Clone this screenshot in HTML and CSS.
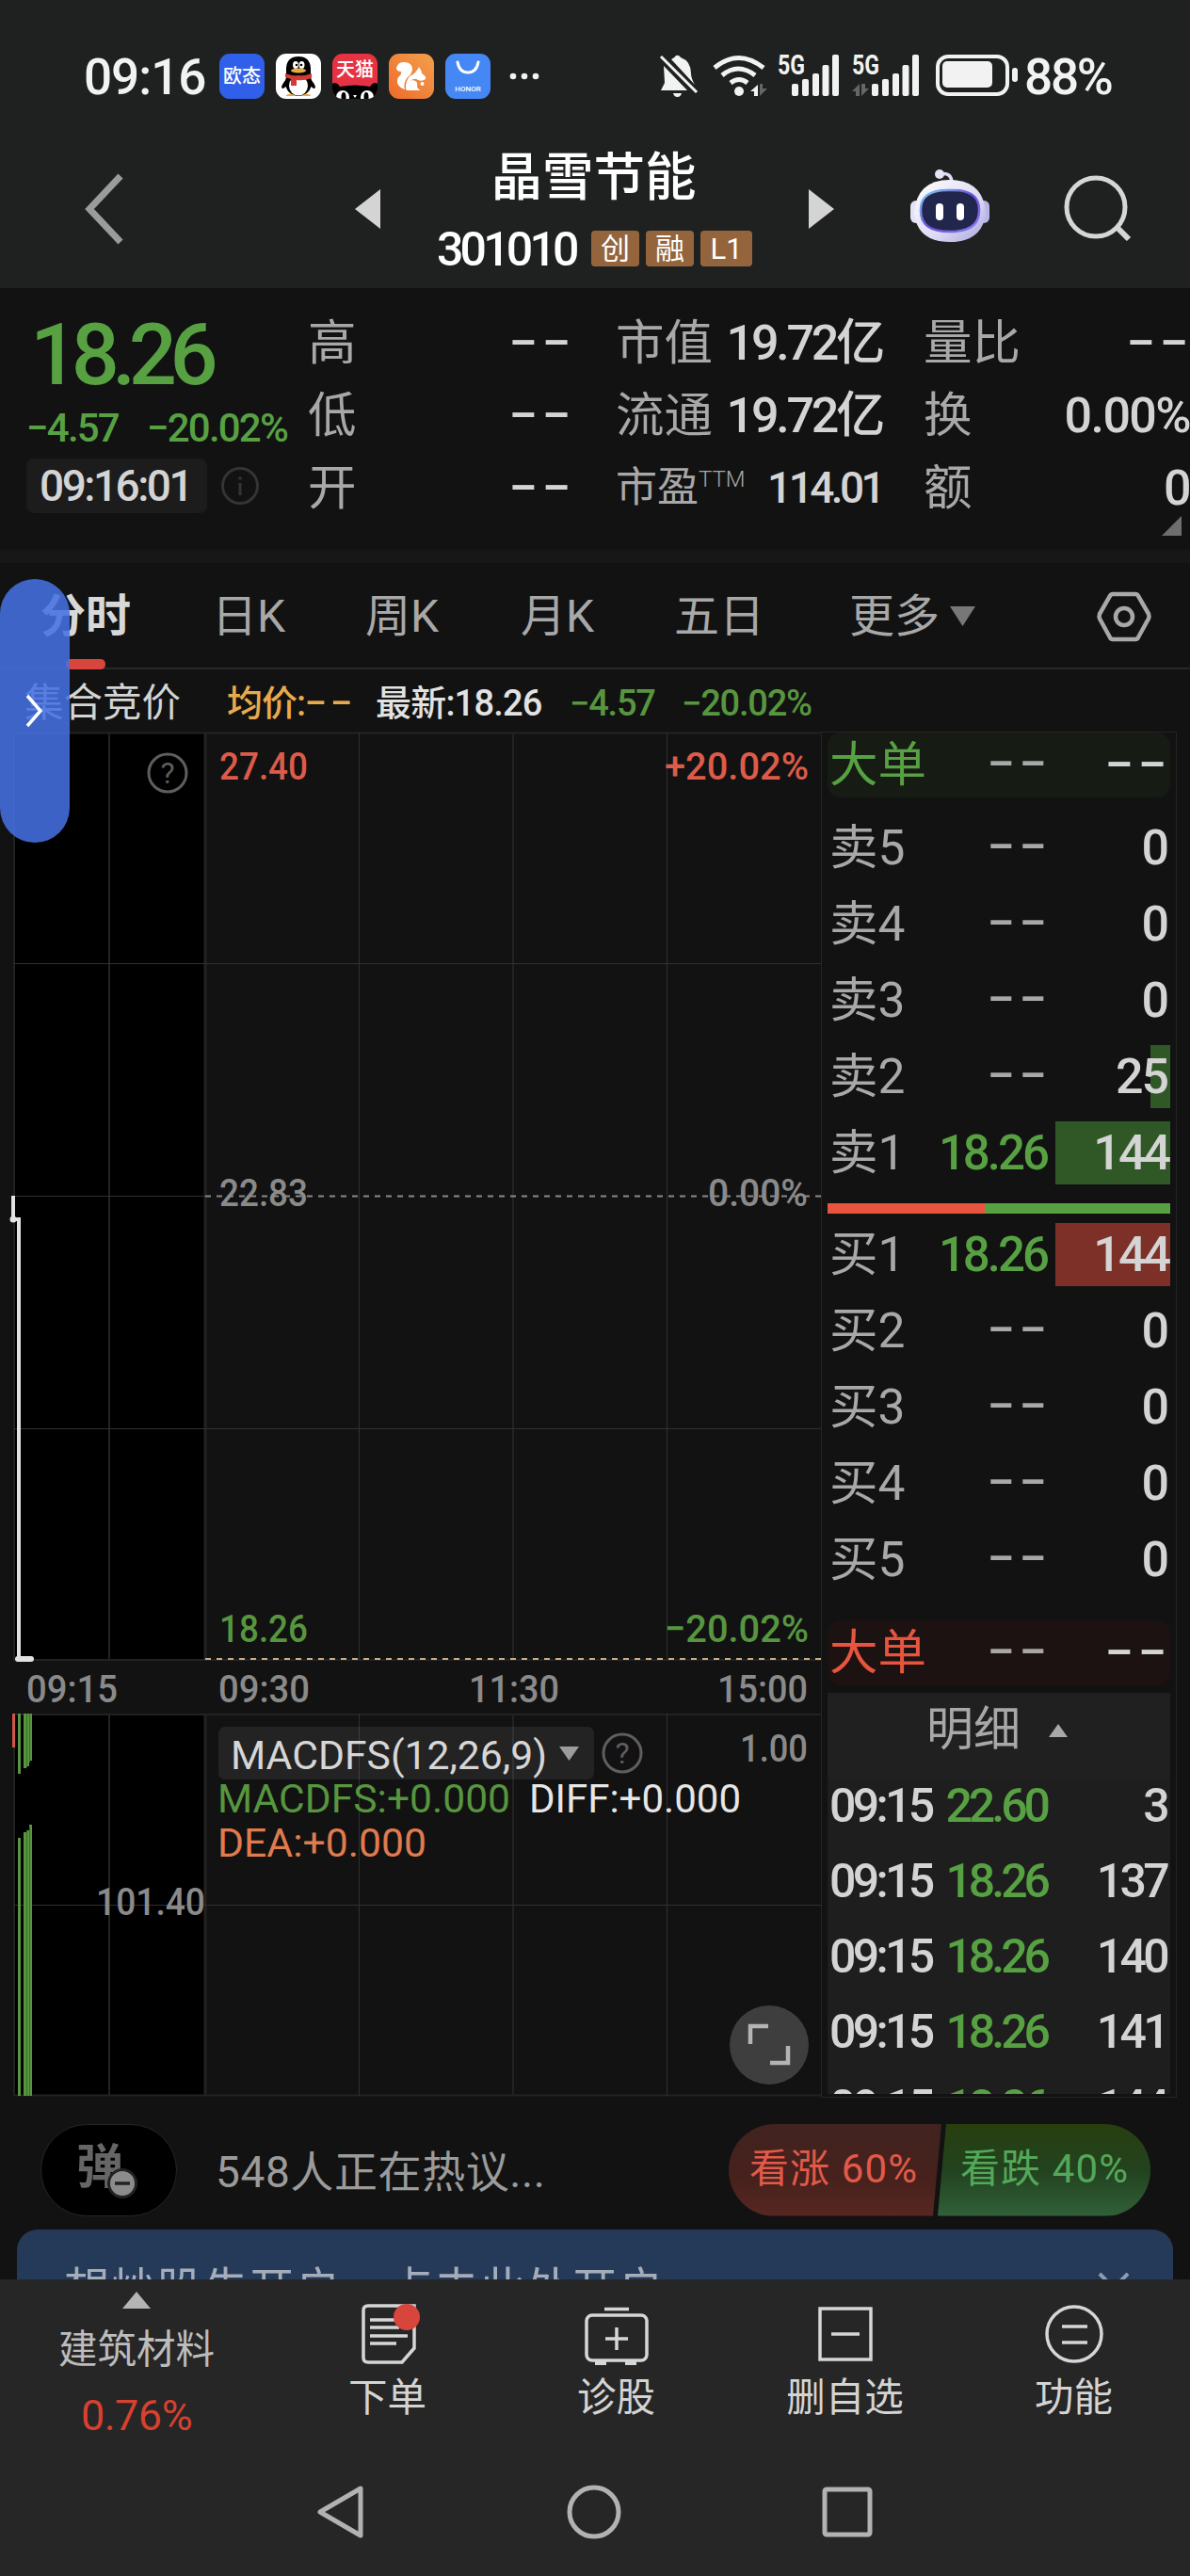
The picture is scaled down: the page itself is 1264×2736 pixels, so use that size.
FILE: index.html
```html
<!DOCTYPE html>
<html lang="zh-CN">

<head>
    <meta charset="UTF-8">
    <meta name="viewport" content="width=device-width, initial-scale=1.0">
    <title>晶雪节能 301010</title>
    <link rel="stylesheet" href="styles.css">
</head>

<body>
    <header class="top">
        <div class="status">
            <span class="clock">09:16</span>
            <div class="apps">
                <span class="app app-ot">欧态</span>
                <svg class="app" viewBox="0 0 48 48">
                    <rect width="48" height="48" fill="#fff" />
                    <path d="M11 27Q3 37 8 37L13 33ZM37 27Q45 37 40 37L35 33Z" fill="#000" />
                    <ellipse cx="24" cy="31" rx="14" ry="14" fill="#000" />
                    <path d="M11 24V15Q12 3 24 3t13 12v9Z" fill="#000" />
                    <ellipse cx="24" cy="34" rx="10" ry="10.500" fill="#fff" />
                    <ellipse cx="21" cy="12" rx="3" ry="4" fill="#fff" />
                    <ellipse cx="27.500" cy="12" rx="3" ry="4" fill="#fff" />
                    <circle cx="22" cy="12" r="1.300" />
                    <circle cx="27" cy="12" r="1.300" />
                    <ellipse cx="24" cy="18" rx="8" ry="2.500" fill="#e9a93c" />
                    <path d="M10 21q14 5 28 0v5q-8 3-16 2v6h-6v-7l-6-2Z" fill="#d33a35" />
                    <path d="M11 44q6-3 10 1H11ZM37 44q-6-3-10 1h10Z" fill="#e9a93c" />
                </svg>
                <span class="app app-tm">天猫
                    <svg viewBox="0 0 48 20">
                        <path d="M0 20V3q4-3 8 3q16-3 32 0q4-6 8-3v17Z" fill="#000" />
                        <ellipse cx="11" cy="17" rx="7" ry="7" fill="#fff" />
                        <ellipse cx="37" cy="17" rx="7" ry="7" fill="#fff" />
                        <ellipse cx="12" cy="17" rx="2.500" ry="5" fill="#000" />
                        <ellipse cx="36" cy="17" rx="2.500" ry="5" fill="#000" />
                        <path d="M22 15h4l-2 3Z" fill="#fff" />
                    </svg>
                </span>
                <svg class="app" viewBox="0 0 48 48">
                    <defs>
                        <linearGradient id="uc" x1="0" y1="1" x2="1" y2="0">
                            <stop offset="0" stop-color="#ee6a2c" />
                            <stop offset="1" stop-color="#f3a04c" />
                        </linearGradient>
                    </defs>
                    <rect width="48" height="48" fill="url(#uc)" />
                    <path d="M17 38Q6 34 10 25q4-3 3-6q-5 0-5-4q2-7 9-6q8 1 8 7q0 5-5 9q-5 6-3 13Z" fill="#fff" />
                    <path d="M22 24q7-3 10-10q3 4 3 7q5 3 4 6q-4 3-8 1q-4-3-8 1q-5 4-3 9q-4-6 2-14Z" fill="#fff" />
                    <path d="M18 37q-1-8 7-9q7 1 5 7q1 3 4 4H21q-3 0-3-2Z" fill="#fff" />
                    <circle cx="35.500" cy="32" r="2" fill="#fff" />
                </svg>
                <span class="app app-honor">
                    <svg viewBox="0 0 48 34">
                        <path d="M13 9q2 11 11 11t11-11" fill="none" stroke="#fff" stroke-width="3"
                            stroke-linecap="round" />
                    </svg>
                    HONOR
                </span>
            </div>
            <svg class="more" viewBox="0 0 32 8" fill="#f2f2f2">
                <circle cx="4" cy="4" r="3.300" />
                <circle cx="16" cy="4" r="3.300" />
                <circle cx="28" cy="4" r="3.300" />
            </svg>
            <svg class="signals" viewBox="0 0 384 48" fill="#f2f2f2">
                <!-- muted bell -->
                <path d="M13 6q4-2 5-4q3-1 5 2q11 4 11 17q0 5 4 12l-25-27ZM5 13l25 26H2l4-8Z" />
                <path d="M15 42h9q-1 4-4.500 4t-4.500-4Z" />
                <path d="M2 3l38 38" stroke="#f2f2f2" stroke-width="3" />
                <!-- wifi -->
                <g fill="none" stroke="#f2f2f2" stroke-width="5">
                    <path d="M59 15q25-21 52 0" />
                    <path d="M67 23q17-14 35 0" />
                    <path d="M76 31q9-7 18 0" />
                </g>
                <circle cx="85" cy="40" r="5" />
                <path d="M105 45V33l-8 7h4v5Z" />
                <path d="M107 32v13l8-8h-5v-5Z" fill="#666" />
                <!-- sim 1 -->
                <text class="net" x="126" y="22" textLength="29" lengthAdjust="spacingAndGlyphs">5G</text>
                <rect x="141" y="32" width="7" height="13" rx="2" />
                <rect x="152" y="27" width="7" height="18" rx="2" />
                <rect x="163" y="21" width="7" height="24" rx="2" />
                <rect x="173.500" y="12" width="7" height="33" rx="2" />
                <rect x="184" y="1" width="7" height="44" rx="2" />
                <!-- sim 2 -->
                <text class="net" x="205" y="22" textLength="29" lengthAdjust="spacingAndGlyphs">5G</text>
                <path d="M213 45V32l-8 8h4v5ZM215 32v13l8-8h-4v-5Z" fill="#666" />
                <rect x="226" y="32" width="7" height="13" rx="2" />
                <rect x="237" y="27" width="7" height="18" rx="2" />
                <rect x="248" y="21" width="7" height="24" rx="2" />
                <rect x="258.500" y="12" width="7" height="33" rx="2" />
                <rect x="269" y="1" width="7" height="44" rx="2" />
                <!-- battery -->
                <rect x="296" y="3" width="74" height="40" rx="11" fill="none" stroke="#f2f2f2" stroke-width="4" />
                <rect x="301" y="8" width="53" height="28" rx="5" />
                <rect x="375" y="15" width="6" height="15" rx="3" />
            </svg>
            <span class="battery">88%</span>
        </div>

        <div class="title-bar">
            <svg class="back" viewBox="0 0 46 80">
                <path d="M41 5L8 40l33 35" fill="none" stroke="#9b9b9b" stroke-width="7" />
            </svg>
            <svg class="prev" viewBox="0 0 27 42"><path d="M27 0v42L0 21Z" fill="#d4d4d4" /></svg>
            <div class="name">
                <h1>晶雪节能</h1>
                <p><b>301010</b><i>创</i><i>融</i><i class="l1">L1</i></p>
            </div>
            <svg class="next" viewBox="0 0 27 42"><path d="M0 0v42l27-21Z" fill="#d4d4d4" /></svg>
            <svg class="robot" viewBox="0 0 86 80">
                <defs>
                    <linearGradient id="shell" x1="0" y1="0" x2="1" y2="1">
                        <stop offset="0" stop-color="#fff" />
                        <stop offset=".6" stop-color="#dcdaf2" />
                        <stop offset="1" stop-color="#a8a4e0" />
                    </linearGradient>
                    <linearGradient id="rim" x1="0" y1="0" x2="1" y2="1">
                        <stop offset="0" stop-color="#7fd0ee" />
                        <stop offset=".5" stop-color="#6a4fd8" />
                        <stop offset="1" stop-color="#8a7cf0" />
                    </linearGradient>
                </defs>
                <path d="M32 6q13-3 13 10" fill="none" stroke="#dcdaf2" stroke-width="3.500" />
                <circle cx="32" cy="6" r="5" fill="#e4e2f5" />
                <rect x="1" y="34" width="12" height="24" rx="6" fill="#e4e2f5" />
                <rect x="73" y="34" width="12" height="24" rx="6" fill="#b9b6e6" />
                <path d="M43 12q36 0 38 36q-4 30-38 30T5 48q2-36 38-36Z" fill="url(#shell)" />
                <path d="M43 23q32-1 31 22q0 22-31 22T12 45q-1-23 31-22Z" fill="#20264c" stroke="url(#rim)"
                    stroke-width="2.500" />
                <rect x="28" y="37" width="8" height="18" rx="4" fill="#fff" />
                <rect x="50" y="37" width="8" height="18" rx="4" fill="#fff" />
            </svg>
            <svg class="search" viewBox="0 0 74 74" fill="none" stroke="#d6d6d6" stroke-width="5">
                <circle cx="35" cy="35" r="31" />
                <path d="M57 56l13 13" stroke-width="6" />
            </svg>
        </div>
    </header>

    <section class="quote">
        <div class="price">
            <strong>18.26</strong>
            <p class="change"><span>−4.57</span><span>−20.02%</span></p>
            <p class="time"><span>09:16:01</span>
                <svg viewBox="0 0 42 42" fill="none" stroke="#343434" stroke-width="3">
                    <circle cx="21" cy="21" r="18.500" />
                    <path d="M21 18v13M21 11.500v3" />
                </svg>
            </p>
        </div>
        <dl class="col-a">
            <dt>高</dt><dd><span class="dash">--</span></dd>
            <dt>低</dt><dd><span class="dash">--</span></dd>
            <dt>开</dt><dd><span class="dash">--</span></dd>
        </dl>
        <dl class="col-b">
            <dt>市值</dt><dd>19.72亿</dd>
            <dt>流通</dt><dd>19.72亿</dd>
            <dt class="pe">市盈<sup>TTM</sup></dt><dd class="pe">114.01</dd>
        </dl>
        <dl class="col-c">
            <dt>量比</dt><dd><span class="dash">--</span></dd>
            <dt>换</dt><dd>0.00%</dd>
            <dt>额</dt><dd>0</dd>
        </dl>
        <svg class="corner" viewBox="0 0 21 21"><path d="M21 0v21H0Z" fill="#6e6e6e" /></svg>
    </section>

    <nav class="tabs">
        <span class="active">分时</span>
        <span>日K</span>
        <span>周K</span>
        <span>月K</span>
        <span>五日</span>
        <span>更多<svg class="caret" viewBox="0 0 27 21"><path d="M0 0h27L13.500 21Z" fill="#777" /></svg></span>
        <svg class="setting" viewBox="0 0 60 56" fill="none" stroke="#a8a8a8" stroke-width="4.500">
            <path d="M18 4h24q2 0 3 2l11 19q1 3 0 5L45 50q-1 2-3 2H18q-2 0-3-2L4 30q-1-2 0-5L15 6q1-2 3-2Z" />
            <circle cx="30" cy="28" r="9" />
        </svg>
    </nav>

    <div class="legend">
        <span class="auction">集合竞价</span>
        <span class="avg">均价:<span class="dash">--</span></span>
        <span class="last">最新:18.26</span>
        <span class="down">−4.57</span>
        <span class="down">−20.02%</span>
    </div>

    <main class="board">
        <svg class="chart" viewBox="0 777 872 1452">
            <rect x="16" y="779" width="201" height="984" fill="#000" />
            <rect x="16" y="1821" width="201" height="405" fill="#000" />
            <g stroke="#222" stroke-width="2" fill="none">
                <path d="M15 778.500H872M15 1763H872M15 1821H872M15 2225.500H872" />
                <path d="M15 778V1763M15 1820V2226M116 778V1763M116 1820V2226M545 778V1763M545 1820V2226" />
                <path d="M218 778V1763M218 1820V2226" stroke-width="3" />
            </g>
            <g stroke="#303030" fill="none">
                <path d="M15 1023.500H872M15 1270.500H218M15 1517.500H872M15 2023.500H872" />
                <path d="M381.500 778V1763M381.500 1820V2226M708.500 778V1763M708.500 1820V2226" />
            </g>
            <path d="M218 1270.500H872" stroke="#8a8a8a" stroke-width="2" stroke-dasharray="6 6" />
            <path d="M218 1762H872" stroke="#c9ad84" stroke-width="2" stroke-dasharray="6 6" />

            <!-- auction price -->
            <path d="M14 1270v25h6v467h13" fill="none" stroke="#e2e2e2" stroke-width="4" />
            <circle cx="14" cy="1295" r="3.500" fill="#e2e2e2" />
            <path d="M19 1762h14" stroke="#e2e2e2" stroke-width="6" stroke-linecap="round" />

            <!-- auction volume -->
            <rect x="13" y="1820" width="3" height="36" fill="#cf5546" />
            <g fill="#57963f">
                <rect x="19" y="1820" width="3" height="64" />
                <path d="M25 1820h9v50h-3v6h-3v2h-3Z" />
                <rect x="19" y="1952" width="3" height="274" />
                <path d="M25 2226v-280h3v-2h3v-6h3v288Z" />
            </g>
            <path d="M28.500 1820v57M31.500 1820v52M28.500 1944v282M31.500 1940v286" stroke="#3c7029" />

            <g class="label">
                <text class="up" x="233" y="828" textLength="94" lengthAdjust="spacingAndGlyphs">27.40</text>
                <text class="up" x="706" y="828" textLength="153" lengthAdjust="spacingAndGlyphs">+20.02%</text>
                <text x="233" y="1281" textLength="94" lengthAdjust="spacingAndGlyphs">22.83</text>
                <text x="752" y="1281" textLength="106" lengthAdjust="spacingAndGlyphs">0.00%</text>
                <text class="fall" x="233" y="1744" textLength="94" lengthAdjust="spacingAndGlyphs">18.26</text>
                <text class="fall" x="706" y="1744" textLength="153" lengthAdjust="spacingAndGlyphs">−20.02%</text>
                <text x="28" y="1808" textLength="97" lengthAdjust="spacingAndGlyphs">09:15</text>
                <text x="232" y="1808" textLength="97" lengthAdjust="spacingAndGlyphs">09:30</text>
                <text x="498" y="1808" textLength="96" lengthAdjust="spacingAndGlyphs">11:30</text>
                <text x="762" y="1808" textLength="96" lengthAdjust="spacingAndGlyphs">15:00</text>
                <text x="786" y="1871" textLength="72" lengthAdjust="spacingAndGlyphs">1.00</text>
                <text x="102" y="2034" textLength="116" lengthAdjust="spacingAndGlyphs">101.40</text>
            </g>

            <g class="help">
                <circle cx="178" cy="821" r="20" />
                <text x="178" y="832">?</text>
                <circle cx="661" cy="1862" r="20" />
                <text x="661" y="1873">?</text>
            </g>

            <rect x="232" y="1834" width="399" height="56" rx="7" fill="#fff" fill-opacity=".075" />
            <path d="M594 1855h21l-10.500 15Z" fill="#9c9c9c" />
            <g class="macd">
                <text x="245" y="1879" fill="#d6d6d6" textLength="336" lengthAdjust="spacingAndGlyphs">MACDFS(12,26,9)</text>
                <text x="231" y="1925" fill="#57963f" textLength="311" lengthAdjust="spacingAndGlyphs">MACDFS:+0.000</text>
                <text x="562" y="1925" fill="#e6e6e6" textLength="225" lengthAdjust="spacingAndGlyphs">DIFF:+0.000</text>
                <text x="231" y="1972" fill="#e07b4e" textLength="222" lengthAdjust="spacingAndGlyphs">DEA:+0.000</text>
            </g>

            <circle cx="817" cy="2172" r="42" fill="#3e3e3e" />
            <path d="M797 2171v-19h19M837 2173v18h-19" fill="none" stroke="#b4b4b4" stroke-width="4.500" />
        </svg>

        <aside class="book">
            <div class="row big sell"><span>大单</span><span class="dash">--</span><em><span class="dash">--</span></em></div>
            <div class="asks">
                <div class="row"><span>卖5</span><span class="dash">--</span><em>0</em></div>
                <div class="row"><span>卖4</span><span class="dash">--</span><em>0</em></div>
                <div class="row"><span>卖3</span><span class="dash">--</span><em>0</em></div>
                <div class="row"><span>卖2</span><span class="dash">--</span><em class="bar small">25</em></div>
                <div class="row"><span>卖1</span><b>18.26</b><em class="bar">144</em></div>
            </div>
            <div class="ratio"></div>
            <div class="bids">
                <div class="row"><span>买1</span><b>18.26</b><em class="bar">144</em></div>
                <div class="row"><span>买2</span><span class="dash">--</span><em>0</em></div>
                <div class="row"><span>买3</span><span class="dash">--</span><em>0</em></div>
                <div class="row"><span>买4</span><span class="dash">--</span><em>0</em></div>
                <div class="row"><span>买5</span><span class="dash">--</span><em>0</em></div>
            </div>
            <div class="row big buy"><span>大单</span><span class="dash">--</span><em><span class="dash">--</span></em></div>
            <div class="detail-head">明细<svg viewBox="0 0 20 14"><path d="M10 0l10 14H0Z" fill="#a8a8a8" /></svg></div>
            <div class="detail">
                <p><span>09:15</span><b>22.60</b><em>3</em></p>
                <p><span>09:15</span><b>18.26</b><em>137</em></p>
                <p><span>09:15</span><b>18.26</b><em>140</em></p>
                <p><span>09:15</span><b>18.26</b><em>141</em></p>
                <p><span>09:15</span><b>18.26</b><em>144</em></p>
            </div>
        </aside>
    </main>

    <section class="talk">
        <div class="danmu">弹
            <svg viewBox="0 0 32 32">
                <circle cx="16" cy="16" r="14.500" fill="#8c8c8c" stroke="#222" stroke-width="3" />
                <path d="M8 16h16" stroke="#222" stroke-width="3.500" />
            </svg>
        </div>
        <p>548人正在热议...</p>
        <div class="vote">
            <span class="rise">看涨 60%</span>
            <span class="drop">看跌 40%</span>
        </div>
    </section>

    <div class="banner">
        <span>想炒股先开户，点击此处开户&gt;</span>
        <svg viewBox="0 0 34 34"><path d="M2 2l30 30M32 2L2 32" stroke="#8f9bb0" stroke-width="4" /></svg>
    </div>

    <footer class="bottom">
        <div class="menu">
            <div class="sector">
                <svg viewBox="0 0 30 18"><path d="M15 0l15 18H0Z" fill="#b4b4b4" /></svg>
                <span>建筑材料</span>
                <b>0.76%</b>
            </div>
            <div class="item">
                <svg viewBox="0 0 70 70" fill="none" stroke="#d6d6d6" stroke-width="3.500">
                    <path d="M14 5h49v45L50 65H14q-5 0-5-5V10q0-5 5-5Z" />
                    <path d="M16 20h26M16 28h31M16 37h40M16 45h28" />
                    <circle cx="55" cy="17" r="14" fill="#d8453c" stroke="none" />
                </svg>
                <span>下单</span>
            </div>
            <div class="item">
                <svg viewBox="0 0 70 70" fill="none" stroke="#d6d6d6" stroke-width="3.500">
                    <rect x="3" y="15" width="64" height="48" rx="6" />
                    <path d="M22 8.500h26M35 28v24M23 40h24" />
                    <path d="M12 66h12M44 66h12" stroke-width="4" />
                </svg>
                <span>诊股</span>
            </div>
            <div class="item">
                <svg viewBox="0 0 70 70" fill="none" stroke="#d6d6d6" stroke-width="3.500">
                    <rect x="8" y="8" width="54" height="54" />
                    <path d="M20 35h30" />
                </svg>
                <span>删自选</span>
            </div>
            <div class="item">
                <svg viewBox="0 0 70 70" fill="none" stroke="#d6d6d6" stroke-width="3.500">
                    <circle cx="35" cy="35" r="29" />
                    <path d="M22 27h27M22 44h27" />
                </svg>
                <span>功能</span>
            </div>
        </div>
        <div class="keys">
            <svg viewBox="0 0 60 60"><path d="M51 5v50L8 30Z" /></svg>
            <svg viewBox="0 0 60 60"><circle cx="30" cy="30" r="26" /></svg>
            <svg viewBox="0 0 60 60"><rect x="6" y="6" width="48" height="48" rx="2" /></svg>
        </div>
    </footer>

    <div class="drawer">
        <svg viewBox="0 0 22 36"><path d="M3 2l14 16L3 34" fill="none" stroke="#fff" stroke-width="3.500" /></svg>
    </div>
</body>

</html>
```

FILE: styles.css
```css
* {
    box-sizing: border-box;
}

body {
    margin: 0;
    width: 1264px;
    height: 2736px;
    overflow: hidden;
    position: relative;
    background: #121212;
    color: #d4d4d4;
    font-family: Roboto, "Noto Sans CJK SC", sans-serif;
}

h1,
p,
dl,
dd {
    margin: 0;
}

em,
i {
    font-style: normal;
}

svg {
    display: block;
    flex: none;
}

.dash {
    display: inline-block;
    letter-spacing: 0.06em;
    margin-right: -0.06em;
    transform: translateY(-0.06em) scaleX(1.7);
    transform-origin: right;
}

/* status bar + title */
.top {
    height: 306px;
    background: #1f2120;
}

.status {
    display: flex;
    align-items: center;
    height: 162px;
    padding-left: 89px;
    color: #f2f2f2;
    font-size: 53px;
    font-weight: 500;
    line-height: 60px;
}

.clock {
    width: 144px;
    padding-top: 2px;
    letter-spacing: -1px;
}

.apps {
    display: flex;
    gap: 12px;
}

.app {
    width: 48px;
    height: 48px;
    border-radius: 11px;
    overflow: hidden;
    color: #fff;
    text-align: center;
}

.app-ot {
    background: #3060ea;
    font-size: 20px;
    line-height: 49px;
}

.app-tm {
    background: #e63344;
    font-size: 20px;
    line-height: 34px;
}

.app-tm svg {
    margin-top: -5px;
}

.app-honor {
    background: #4588f5;
    font-size: 8px;
    line-height: 8px;
}

.more {
    width: 32px;
    margin-left: 20px;
}

.signals {
    width: 384px;
    height: 48px;
    margin-left: 127px;
    overflow: visible;
}

.net {
    font-size: 29px;
    font-weight: 700;
}

.battery {
    margin-left: 4px;
    padding-top: 2px;
    letter-spacing: -2.2px;
}

.title-bar {
    display: flex;
    height: 144px;
    padding-left: 87px;
}

.title-bar svg {
    margin-top: 39px;
}

.title-bar .back {
    width: 46px;
    height: 80px;
    margin-top: 20px;
}

.prev,
.next {
    width: 27px;
    height: 42px;
}

.prev {
    margin-left: 244px;
}

.name {
    width: 455px;
    text-align: center;
    color: #fff;
}

h1 {
    margin: -1px 2px 0 0;
    font-size: 54.5px;
    font-weight: 500;
    line-height: 54px;
}

.name p {
    display: flex;
    align-items: center;
    height: 38px;
    margin: 30px 0 0 60px;
}

.name b {
    width: 164px;
    padding-top: 1px;
    text-align: left;
    font-size: 50px;
    font-weight: 500;
    letter-spacing: -3.8px;
}

.name i {
    width: 51px;
    height: 38px;
    margin-right: 7px;
    border-radius: 4px;
    background: #94653c;
    font-size: 31px;
    line-height: 39px;
}

.name .l1 {
    width: 55px;
    margin-right: 0;
}

.title-bar .robot {
    width: 86px;
    height: 80px;
    margin: 17px 0 0 80px;
}

.title-bar .search {
    width: 74px;
    height: 74px;
    margin: 23px 0 0 77px;
}

/* quote */
.quote {
    position: relative;
    display: flex;
    height: 292px;
    padding: 20px 0 0 28px;
    border-bottom: 14px solid #171717;
}

.price {
    width: 299px;
    color: #57a143;
}

.price strong {
    display: block;
    padding: 7px 0 0 4px;
    font-size: 90px;
    font-weight: 500;
    line-height: 90px;
    letter-spacing: -7.5px;
}

.change {
    display: flex;
    gap: 30px;
    margin-top: 10px;
    font-size: 42px;
    font-weight: 500;
    line-height: 44px;
    letter-spacing: -1.8px;
    white-space: nowrap;
}

.time {
    display: flex;
    align-items: center;
    gap: 14px;
    margin-top: 10px;
}

.time span {
    width: 192px;
    height: 58px;
    padding-left: 14px;
    border-radius: 8px;
    background: #1c1c1c;
    color: #d4d4d4;
    font-size: 46px;
    font-weight: 500;
    line-height: 58px;
    letter-spacing: -2.5px;
}

.time svg {
    width: 42px;
}

dl {
    display: grid;
    grid-template-columns: 104px 1fr;
    grid-auto-rows: 77px;
    align-items: center;
    font-size: 52px;
    line-height: 77px;
    white-space: nowrap;
}

dt {
    color: #a8a8a8;
    font-size: 51.5px;
}

dd {
    text-align: right;
    font-weight: 500;
    letter-spacing: -2.5px;
}

.col-a {
    width: 281px;
}

.col-a .dash,
.col-c .dash {
    margin-right: -0.07em;
}

.col-b {
    width: 283px;
    margin-left: 46px;
}

.col-b dd {
    letter-spacing: -3.2px;
}

.col-c {
    width: 283px;
    margin-left: 44px;
}

.col-c dd {
    letter-spacing: -1.6px;
}

dt.pe {
    font-size: 44px;
}

.col-b dd.pe {
    direction: rtl;
    font-size: 46px;
    letter-spacing: -3.6px;
}

sup {
    font-size: 24px;
    font-weight: 300;
    line-height: 0;
}

.corner {
    position: absolute;
    right: 9px;
    bottom: 15px;
    width: 21px;
}

/* period tabs */
.tabs {
    display: grid;
    grid-template-columns: 182px 163px 165px 163px 186px 262px 60px;
    align-items: center;
    height: 113px;
    padding-left: 43px;
    border-bottom: 2px solid #282828;
    color: #a8a8a8;
    font-size: 48px;
    line-height: 114px;
}

.active {
    position: relative;
    color: #d8d8d8;
    font-weight: 700;
}

.active::after {
    content: "";
    position: absolute;
    left: 27px;
    bottom: 1px;
    width: 42px;
    height: 11px;
    border-radius: 5px;
    background: #d8453c;
}

.caret {
    display: inline-block;
    width: 27px;
    margin-left: 11px;
    vertical-align: 6px;
}

.legend {
    display: flex;
    height: 66px;
    padding-left: 26px;
    font-size: 38px;
    line-height: 72px;
    letter-spacing: -1px;
    white-space: nowrap;
}

.auction {
    width: 215px;
    font-size: 41.5px;
    letter-spacing: 0;
}

.avg {
    width: 158px;
    color: #e8ab4c;
    font-weight: 500;
}

.avg .dash {
    transform: translate(0, -0.06em) scaleX(1.8);
    transform-origin: left;
}

.last {
    width: 206px;
    color: #e2e2e2;
    font-weight: 500;
    letter-spacing: -0.8px;
}

.down {
    width: 119px;
    color: #57963f;
    font-weight: 500;
    letter-spacing: -1.2px;
}

/* chart + order book */
.board {
    display: flex;
    height: 1452px;
}

.chart {
    width: 872px;
    height: 1452px;
}

.label {
    fill: #8a8a8a;
    font-size: 41.5px;
    font-weight: 500;
}

.label .up {
    fill: #dd5b48;
}

.label .fall {
    fill: #57963f;
}

.help circle {
    fill: none;
    stroke: #5e5e5e;
    stroke-width: 3;
}

.help text {
    fill: #5e5e5e;
    font-size: 32px;
    text-anchor: middle;
}

.macd {
    font-size: 43px;
}

.book {
    width: 378px;
    height: 1451px;
    padding: 0 6px;
    border: 1px solid #242424;
}

.row {
    display: grid;
    grid-template-columns: 103px 130px 1fr;
    align-items: center;
    height: 67px;
    margin-bottom: 14px;
    padding-left: 2px;
    color: #a8a8a8;
    font-size: 51.5px;
    line-height: 67px;
    white-space: nowrap;
}

.row > .dash {
    font-weight: 500;
    font-size: 50px;
    text-align: right;
}

.row b {
    width: 128px;
    color: #57a143;
    font-size: 51px;
    font-weight: 500;
    text-align: right;
    letter-spacing: -3px;
}

.row em {
    height: 67px;
    padding-right: 2px;
    color: #d4d4d4;
    font-size: 52px;
    font-weight: 500;
    text-align: right;
    letter-spacing: -1px;
}

.big {
    height: 69px;
    margin: 0;
    border-radius: 14px;
}

.sell {
    background: #161b14;
}

.sell > span:first-child {
    color: #57a143;
}

.buy {
    margin-top: 31px;
    background: #1d1212;
}

.buy > span:first-child {
    color: #e8553f;
}

.asks {
    padding-top: 20px;
}

.row .bar {
    margin-left: 7px;
    padding-right: 2px;
    background: #305827;
    letter-spacing: -3px;
}

.row .small {
    margin-left: 0;
    padding-right: 3px;
    background: linear-gradient(to left, #305827 21px, transparent 21px);
    letter-spacing: -2px;
}

.bids .bar {
    background: #7d3028;
}

.ratio {
    height: 11px;
    margin: 20px 0 10px;
    background: linear-gradient(to right, #e8553f 46%, #57a143 46%);
}

.detail-head {
    display: flex;
    align-items: center;
    height: 91px;
    margin-top: 8px;
    padding: 0 0 14px 105px;
    background: #202020;
    color: #a8a8a8;
    font-size: 50px;
    line-height: 70px;
}

.detail-head svg {
    width: 20px;
    margin: 2px 0 0 30px;
}

.detail {
    height: 335px;
    padding: 0 4px 0 2px;
    overflow: hidden;
    background: #1e1e1e;
}

.detail p {
    display: grid;
    grid-template-columns: 120px 111px 1fr;
    height: 80px;
    font-size: 50px;
    font-weight: 500;
    line-height: 58px;
    letter-spacing: -3.7px;
}

.detail b {
    color: #57a143;
    font-weight: 500;
    text-align: right;
    letter-spacing: -4px;
}

.detail em {
    text-align: right;
}

/* discussion */
.talk {
    display: flex;
    align-items: center;
    height: 97px;
    margin-top: 27px;
    padding-left: 43px;
    font-size: 45px;
}

.danmu {
    position: relative;
    width: 145px;
    height: 98px;
    padding-left: 37px;
    border: 1px solid #262626;
    border-radius: 49px;
    background: #000;
    color: #666;
    font-size: 50px;
    font-weight: 700;
    line-height: 91px;
}

.danmu svg {
    position: absolute;
    left: 70px;
    top: 46px;
    width: 32px;
}

.talk p {
    width: 543px;
    padding: 0 0 4px 41px;
    color: #9b9b9b;
    font-size: 46px;
    letter-spacing: 0.6px;
}

.vote {
    display: flex;
    width: 448px;
    margin-left: 43px;
    font-size: 42px;
    line-height: 95px;
    white-space: nowrap;
    letter-spacing: 1.1px;
}

.vote span {
    height: 98px;
}

.rise {
    width: 226px;
    padding-left: 22px;
    border-radius: 49px 0 0 49px;
    clip-path: polygon(0 0, 100% 0, 217px 100%, 0 100%);
    background: linear-gradient(#412320, #47211c 60%, #582722);
    color: #e15a4a;
}

.drop {
    width: 226px;
    margin-left: -4px;
    padding-left: 24px;
    border-radius: 0 49px 49px 0;
    clip-path: polygon(9px 0, 100% 0, 100% 100%, 0 100%);
    background: linear-gradient(#273f0f, #23421f 50%, #306039);
    color: #53a85a;
}

.banner {
    display: flex;
    justify-content: space-between;
    align-items: flex-start;
    height: 53px;
    margin: 15px 18px 0;
    padding: 33px 46px 0 50px;
    border-radius: 22px 22px 0 0;
    overflow: hidden;
    background: #253a59;
    color: #a5adba;
    font-size: 49px;
    line-height: 64px;
}

.banner svg {
    width: 34px;
    height: 34px;
    margin-top: 12px;
}

/* bottom bar */
.bottom {
    position: relative;
    height: 315px;
    background: #262626;
}

.menu {
    display: grid;
    grid-template-columns: 290px 243px 243px 243px 243px;
    height: 179px;
    font-size: 41.5px;
}

.menu > div {
    display: flex;
    flex-direction: column;
    align-items: center;
}

.sector svg {
    width: 30px;
    margin-top: 13px;
}

.sector span {
    margin-top: 19px;
    color: #bcbcbc;
    line-height: 50px;
}

.sector b {
    margin-top: 20px;
    color: #d8402f;
    font-size: 45px;
    font-weight: 400;
    line-height: 50px;
    letter-spacing: -0.5px;
}

.item svg {
    width: 70px;
    margin-top: 23px;
}

.item span {
    margin-top: 8px;
    line-height: 50px;
}

.keys {
    display: flex;
    gap: 209px;
    padding: 38px 0 0 332px;
}

.keys svg {
    width: 60px;
    fill: none;
    stroke: #b2b2b2;
    stroke-width: 5;
    stroke-linejoin: round;
}

/* edge handle */
.drawer {
    position: absolute;
    left: 0;
    top: 615px;
    width: 74px;
    height: 280px;
    padding: 122px 0 0 26px;
    border-radius: 37px;
    background: rgba(70, 112, 226, 0.87);
}

.drawer svg {
    width: 22px;
}
```
